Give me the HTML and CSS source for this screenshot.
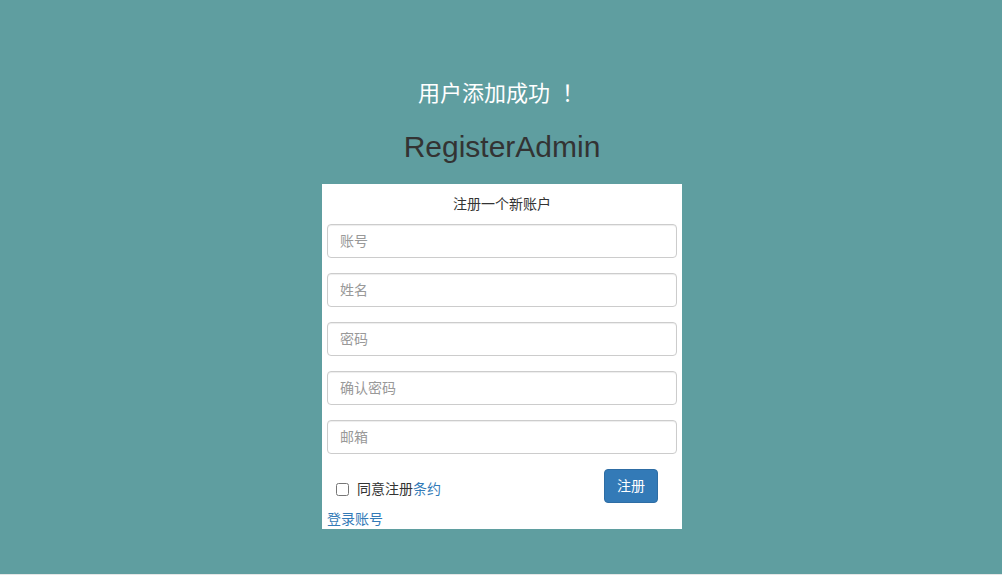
FILE: index.html
```html
<!DOCTYPE html>
<html lang="zh">
<head>
<meta charset="utf-8">
<title>RegisterAdmin</title>
<link rel="stylesheet" href="styles.css">
</head>
<body>
<div class="page">
  <h3 class="notice">用户添加成功<span class="bang">！</span></h3>
  <div class="logo">RegisterAdmin</div>
  <div class="box">
    <p class="box-msg">注册一个新账户</p>
    <form class="form">
      <input class="field" type="text" placeholder="账号">
      <input class="field" type="text" placeholder="姓名">
      <input class="field" type="password" placeholder="密码">
      <input class="field" type="password" placeholder="确认密码">
      <input class="field" type="email" placeholder="邮箱">
      <div class="row">
        <label class="agree"><input class="check" type="checkbox"><span>同意注册<a class="link" href="#">条约</a></span></label>
        <button class="btn" type="button">注册</button>
      </div>
    </form>
    <a class="link login" href="#">登录账号</a>
  </div>
</div>
</body>
</html>
```

FILE: styles.css
```css
html {
  background: #e6e6e6;
}
body {
  margin: 0;
  height: 574px;
  background: #5f9ea0;
  font-family: "Liberation Sans", Arial, "Noto Sans CJK SC", sans-serif;
  font-size: 14px;
  line-height: 20px;
  color: #333;
}
.page {
  display: flex;
  flex-direction: column;
  align-items: center;
  padding-top: 78px;
  padding-left: 2px;
}
.notice {
  margin: 0 2px 0 0;
  font-family: "Noto Sans CJK TC", sans-serif;
  font-size: 22px;
  line-height: 26px;
  font-weight: normal;
  color: #fff;
}
.bang {
  margin-left: 12px;
}
.logo {
  margin-top: 25px;
  font-size: 30px;
  line-height: 36px;
  color: #333;
}
.box {
  margin-top: 19px;
  width: 360px;
  box-sizing: border-box;
  background: #fff;
  padding: 5px 5px 0;
  display: flex;
  flex-direction: column;
}
.box-msg {
  margin: 0;
  padding: 5px 0 10px;
  text-align: center;
}
.form {
  display: flex;
  flex-direction: column;
}
.field {
  display: block;
  box-sizing: border-box;
  width: 100%;
  height: 34px;
  margin: 0 0 15px;
  padding: 6px 12px;
  border: 1px solid #ccc;
  border-radius: 4px;
  box-shadow: inset 0 1px 1px rgba(0,0,0,.075);
  font-family: inherit;
  font-size: 14px;
  color: #555;
  outline: none;
}
.field::placeholder {
  color: #999;
}
.row {
  display: flex;
  justify-content: space-between;
  align-items: flex-start;
  height: 40px;
}
.agree {
  display: flex;
  align-items: center;
  margin-top: 10px;
  margin-left: 9px;
  height: 20px;
}
.check {
  width: 13px;
  height: 13px;
  margin: 0 8px 0 0;
}
.link {
  color: #337ab7;
  text-decoration: none;
}
.btn {
  margin-right: 19px;
  height: 34px;
  padding: 6px 12px;
  border: 1px solid #2e6da4;
  border-radius: 4px;
  background: #337ab7;
  color: #fff;
  font-family: inherit;
  font-size: 14px;
  line-height: 20px;
}
.login {
  display: block;
  align-self: flex-start;
  line-height: 20px;
}
```
